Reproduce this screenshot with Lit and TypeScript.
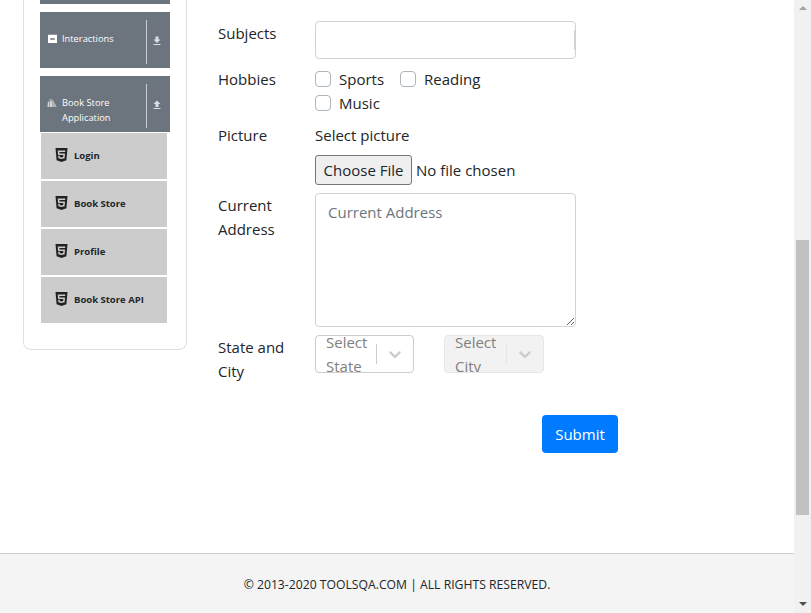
import { LitElement, html, css, svg } from "lit";
import { customElement } from "lit/decorators.js";

const H5 = svg`<path d="M0 32l34.9 395.8L191.5 480l157.6-52.2L384 32H0zm308.2 127.9H124.4l4.1 49.4h175.6l-13.6 148.4-97.9 27v.3h-1.1l-98.7-27.3-6-75.8h47.7L138 320l53.5 14.5 53.7-14.5 6-62.2H84.3L71.5 112.2h241.1l-4.4 47.7z"/>`;
const CHEVRON = svg`<path d="M4.516 7.548c0.436-0.446 1.043-0.481 1.576 0l3.908 3.747 3.908-3.747c0.533-0.481 1.141-0.446 1.576 0 0.436 0.445 0.408 1.197 0 1.615-0.406 0.418-4.695 4.502-4.695 4.502-0.217 0.223-0.502 0.335-0.789 0.335s-0.572-0.112-0.79-0.335c0 0-4.287-4.084-4.695-4.502s-0.436-1.17 0-1.615z"/>`;

@customElement("app-root")
export class AppRoot extends LitElement {
  static styles = css`
    :host {
      display: flex;
      height: 613px;
      overflow: hidden;
      font-family: "Open Sans", "Noto Sans", sans-serif;
      color: #212529;
      background: #fff;
    }
    .page { flex: 1; min-width: 0; display: flex; flex-direction: column; }
    .main { height: 553px; display: flex; }
    .sidebar { width: 164px; margin-left: 23px; height: 350px; box-sizing: border-box;
      border: 1px solid #dfdfdf; border-top: 0; border-radius: 0 0 8px 8px; padding: 0 16px; flex: none; }
    .stub { height: 4px; background: #6c757d; margin-bottom: 8px; }
    .head { height: 56px; background: #6c757d; color: #fff; display: flex; margin-bottom: 8px; font-size: 9.300px; line-height: 15px; }
    .head.open { margin-bottom: 1px; }
    .head .icon { width: 22px; flex: none; display: flex; justify-content: flex-end; padding: 19px 5px 0 0; box-sizing: border-box; }
    .head .icon svg { width: 9px; height: 15px; fill: #fff; }
    .head .icon svg.books { fill: #d4d6d9; width: 10px; }
    .head .title { flex: 1; padding-top: 19px; white-space: pre-line; }
    .head .bar { width: 1px; height: 44px; margin-top: 8px; background: #c9ccd0; }
    .head .arrow { width: 23px; flex: none; display: flex; justify-content: center; padding: 23px 3px 0 0; box-sizing: border-box; }
    .head .arrow svg { width: 12px; height: 12px; fill: #dcdfe2; }
    .sub { height: 46px; width: 126px; margin: 0 0 2px 1px; background: #ccc; display: flex; align-items: center;
      font-size: 9.500px; font-weight: 700; padding: 0 0 2px 14px; box-sizing: border-box; }
    .sub svg { width: 13px; height: 16px; fill: #222; margin-right: 6px; flex: none; }

    .form { margin-left: 31px; width: 400px; padding-top: 21px; display: flex; flex-direction: column; gap: 8px;
      font-size: 15px; line-height: 24px; }
    .row { display: grid; grid-template-columns: 97px 1fr; }
    .lbl { padding-right: 15px; }
    .text { display: flex; align-items: center; width: 261px; height: 38px; box-sizing: border-box; border: 1px solid #ced4da; border-radius: 4px; }
    .text input { flex: 1; min-width: 0; height: 100%; box-sizing: border-box; border: 0; padding: 0; outline: none; background: transparent; }
    .text i { width: 1px; height: 20px; background: #d4d4d4; flex: none; }
    .checks { display: flex; flex-wrap: wrap; width: 240px; }
    .check { display: flex; align-items: center; margin-right: 16px; }
    .check input { appearance: none; width: 16px; height: 16px; margin: 0 8px 0 0; border: 1px solid #adb5bd; border-radius: 4px; background: #fff; }
    .picture-label { margin-bottom: 8px; }
    input[type="file"] { display: block; font: inherit; width: 261px; height: 30px; }
    input[type="file"]::file-selector-button { width: 97px; height: 30px; box-sizing: border-box; margin-right: 4px; padding: 0;
      font: inherit; color: #212529; background: #efefef; border: 1px solid #767676; border-radius: 3px; }
    textarea { display: block; width: 261px; height: 134px; box-sizing: border-box; border: 1px solid #ced4da; border-radius: 4px;
      padding: 6px 12px; font: inherit; color: #495057; outline: none; margin: 0; }
    textarea::placeholder { color: #6c757d; }
    .selects { display: flex; gap: 30px; align-items: flex-start; }
    .select { height: 38px; width: 99px; box-sizing: border-box; border: 1px solid #ccc; border-radius: 4px; display: flex; align-items: center; overflow: hidden; color: #808080; background: #fff; }
    .select.off { width: 100px; background: #f2f2f2; border-color: #e6e6e6; }
    .select .val { flex: 1; min-width: 0; padding-left: 10px; height: 48px; flex-shrink: 0; width: 50px; }
    .select .sep { width: 1px; height: 20px; background: #ccc; flex: none; }
    .select.off .sep { background: #e6e6e6; }
    .select .chev { width: 36px; height: 36px; display: flex; align-items: center; justify-content: center; flex: none; }
    .select .chev svg { width: 20px; height: 20px; fill: #ccc; }
    .actions { display: flex; justify-content: flex-end; margin-top: 24px; }
    .submit { height: 38px; width: 76px; border: 0; border-radius: 4px; background: #007bff; color: #fff; font: inherit; padding: 0; }

    .footer { flex: 1; background: #f4f4f4; border-top: 1px solid #ccc; box-sizing: border-box; display: flex; align-items: center; justify-content: center;
      font-size: 12.200px; padding-top: 2px; color: #212529; }

    .scroll { width: 17px; flex: none; background: #f1f1f1; display: flex; flex-direction: column; align-items: center; }
    .scroll .up, .scroll .down { width: 0; height: 0; border-left: 4px solid transparent; border-right: 4px solid transparent; flex: none; }
    .scroll .up { border-bottom: 4px solid #a3a3a3; margin-top: 6px; margin-bottom: 230px; }
    .scroll .thumb { width: 13px; height: 275px; background: #c1c1c1; flex: none; }
    .scroll .down { border-top: 4px solid #505050; margin-top: 87px; }
  `;

  private head(icon: unknown, title: string, arrow: unknown, open = false) {
    return html`<div class="head ${open ? "open" : ""}">
      <div class="icon"><svg class="${open ? "books" : ""}" viewBox="0 0 12 20">${icon}</svg></div>
      <div class="title">${title}</div>
      <div class="bar"></div>
      <div class="arrow"><svg viewBox="0 0 24 24">${arrow}</svg></div>
    </div>`;
  }

  render() {
    const down = svg`<path d="M19 9h-4V3H9v6H5l7 7 7-7zM5 18v2h14v-2H5z"/>`;
    const up = svg`<path d="M9 16h6v-6h4l-7-7-7 7h4zm-4 2h14v2H5z"/>`;
    const square = svg`<path fill-rule="evenodd" d="M0 5h12v11H0zM3 9.500v2h6v-2z"/>`;
    const books = svg`<path d="M0 16l.5-7h1.500v7zM2.800 16V5.500h1.400v3h1.300V5.500h1.200V16zM7.500 16V8h1v8zM9.300 16V9.500l2.700 6.500h-1l-1-2.500V16z"/>`;
    return html`
      <div class="page">
        <div class="main">
          <div class="sidebar">
            <div class="stub"></div>
            ${this.head(square, "Interactions", down)}
            ${this.head(books, "Book Store\nApplication", up, true)}
            ${["Login", "Book Store", "Profile", "Book Store API"].map(
              (t) => html`<div class="sub"><svg viewBox="0 0 384 512">${H5}</svg>${t}</div>`
            )}
          </div>
          <div class="form">
            <div class="row">
              <div class="lbl">Subjects</div>
              <div class="text"><input /><i></i></div>
            </div>
            <div class="row">
              <div class="lbl">Hobbies</div>
              <div class="checks">
                <label class="check"><input type="checkbox" />Sports</label>
                <label class="check"><input type="checkbox" />Reading</label>
                <label class="check"><input type="checkbox" />Music</label>
              </div>
            </div>
            <div class="row">
              <div class="lbl">Picture</div>
              <div>
                <div class="picture-label">Select picture</div>
                <input type="file" />
              </div>
            </div>
            <div class="row">
              <div class="lbl">Current Address</div>
              <textarea placeholder="Current Address"></textarea>
            </div>
            <div class="row">
              <div class="lbl">State and City</div>
              <div class="selects">
                <div class="select">
                  <div class="val">Select State</div>
                  <div class="sep"></div>
                  <div class="chev"><svg viewBox="0 0 20 20">${CHEVRON}</svg></div>
                </div>
                <div class="select off">
                  <div class="val">Select City</div>
                  <div class="sep"></div>
                  <div class="chev"><svg viewBox="0 0 20 20">${CHEVRON}</svg></div>
                </div>
              </div>
            </div>
            <div class="actions"><button class="submit">Submit</button></div>
          </div>
        </div>
        <div class="footer">© 2013-2020 TOOLSQA.COM | ALL RIGHTS RESERVED.</div>
      </div>
      <div class="scroll">
        <div class="up"></div>
        <div class="thumb"></div>
        <div class="down"></div>
      </div>
    `;
  }
}
